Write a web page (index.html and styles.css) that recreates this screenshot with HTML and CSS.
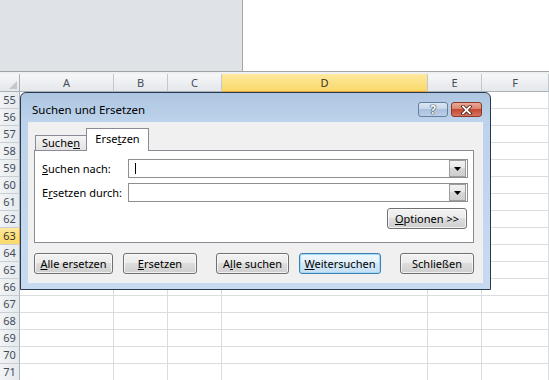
FILE: index.html
```html
<!DOCTYPE html>
<html lang="de">
<head>
  <meta charset="UTF-8">
  <title>Suchen und Ersetzen</title>
  <link rel="stylesheet" href="styles.css">
</head>
<body>
  <div class="top">
    <div class="top-left"></div>
    <div class="top-right"></div>
  </div>
  <div class="top-gap"></div>

  <div class="grid">
    <div class="col rowheads">
      <div class="head corner">
        <svg width="8" height="8" viewBox="0 0 8 8"><polygon points="8,0 8,8 0,8" fill="#c3c8ce"/></svg>
      </div>
      <div class="rowhead">55</div>
      <div class="rowhead">56</div>
      <div class="rowhead">57</div>
      <div class="rowhead">58</div>
      <div class="rowhead">59</div>
      <div class="rowhead">60</div>
      <div class="rowhead">61</div>
      <div class="rowhead">62</div>
      <div class="rowhead selected">63</div>
      <div class="rowhead">64</div>
      <div class="rowhead">65</div>
      <div class="rowhead">66</div>
      <div class="rowhead">67</div>
      <div class="rowhead">68</div>
      <div class="rowhead">69</div>
      <div class="rowhead">70</div>
      <div class="rowhead">71</div>
    </div>
    <div class="col col-a"><div class="head">A</div><div class="cells"></div></div>
    <div class="col col-b"><div class="head">B</div><div class="cells"></div></div>
    <div class="col col-c"><div class="head">C</div><div class="cells"></div></div>
    <div class="col col-d"><div class="head selected">D</div><div class="cells"></div></div>
    <div class="col col-e"><div class="head">E</div><div class="cells"></div></div>
    <div class="col col-f"><div class="head">F</div><div class="cells"></div></div>
  </div>

  <!-- Dialog liegt über dem Tabellenblatt -->
  <div class="dialog">
    <div class="titlebar">
      <span class="title">Suchen und Ersetzen</span>
      <button class="cap-btn help">?</button>
      <button class="cap-btn close">
        <svg width="13" height="10" viewBox="0 0 13 10">
          <path d="M3 1.5 L10 8.5 M10 1.5 L3 8.5" stroke="#4a1a12" stroke-width="3.4" stroke-linecap="square"/>
          <path d="M3 1.5 L10 8.5 M10 1.5 L3 8.5" stroke="#fff" stroke-width="1.8" stroke-linecap="square"/>
        </svg>
      </button>
    </div>

    <div class="client">
      <div class="tabs">
        <div class="tab">Suche<u>n</u></div>
        <div class="tab active">Erse<u>t</u>zen</div>
      </div>

      <div class="panel">
        <div class="field">
          <label class="field-label"><u>S</u>uchen nach:</label>
          <div class="combo">
            <span class="caret"></span>
            <span class="drop"><svg width="7" height="4" viewBox="0 0 7 4"><polygon points="0,0 7,0 3.5,4" fill="#000"/></svg></span>
          </div>
        </div>
        <div class="field">
          <label class="field-label">E<u>r</u>setzen durch:</label>
          <div class="combo">
            <span class="drop"><svg width="7" height="4" viewBox="0 0 7 4"><polygon points="0,0 7,0 3.5,4" fill="#000"/></svg></span>
          </div>
        </div>
        <div class="panel-actions">
          <button class="btn btn-options"><u>O</u>ptionen &gt;&gt;</button>
        </div>
      </div>

      <div class="actions">
        <button class="btn w-79"><u>A</u>lle ersetzen</button>
        <button class="btn w-74 gap-s"><u>E</u>rsetzen</button>
        <button class="btn w-73 gap-l">A<u>l</u>le suchen</button>
        <button class="btn btn-default w-82 gap-s"><u>W</u>eitersuchen</button>
        <button class="btn w-74 gap-l">Schließen</button>
      </div>
    </div>
  </div>
</body>
</html>
```
FILE: styles.css
```css
* {
  box-sizing: border-box;
}

body {
  margin: 0;
  width: 549px;
  height: 380px;
  overflow: hidden;
  position: relative;
  background-color: #fff;
  font-family: "Noto Sans", "DejaVu Sans", sans-serif;
  color: #000;
}

/* Bereich oberhalb des Tabellenblatts */
.top {
  display: flex;
  height: 72px;
  border-bottom: 1px solid #a3a3a3;
}

.top-left {
  width: 243px;
  background-color: #dfe3e8;
  border-right: 1px solid #a6a6a6;
}

.top-right {
  flex: 1;
  background-color: #fff;
}

.top-gap {
  height: 2px;
  background-color: #eef0f2;
}

/* Tabellenblatt */
.grid {
  display: flex;
}

.col {
  flex: none;
}

.rowheads { width: 20px; }
.col-a { width: 94px; }
.col-b { width: 54px; }
.col-c { width: 54px; }
.col-d { width: 206px; }
.col-e { width: 54px; }
.col-f { flex: 1; }

.head {
  height: 18px;
  border-bottom: 1px solid #abb1b9;
  border-right: 1px solid #c3c8ce;
  background: linear-gradient(#f6f7f9, #e4e7eb);
  font-size: 11px;
  line-height: 17px;
  text-align: center;
  color: #444c58;
}

.head.selected {
  background: linear-gradient(#fde99e, #f9d96b);
  border-bottom-color: #e2a33a;
  color: #3a3320;
}

.corner {
  display: flex;
  align-items: flex-end;
  justify-content: flex-end;
  padding: 0 2px 2px 0;
  border-right-color: #abb1b9;
}

.rowhead {
  height: 17px;
  border-bottom: 1px solid #c9ced4;
  border-right: 1px solid #abb1b9;
  background: linear-gradient(to right, #f1f3f5, #e6e9ed);
  font-size: 11px;
  line-height: 16px;
  text-align: center;
  color: #444c58;
}

.rowhead.selected {
  background: linear-gradient(#fde99e, #f9d96b);
  border-right-color: #e2a33a;
  color: #3a3320;
}

.cells {
  height: 289px;
  border-right: 1px solid #dadcdd;
  background: repeating-linear-gradient(#fff 0, #fff 16px, #dadcdd 16px, #dadcdd 17px);
}

/* Dialog */
.dialog {
  position: absolute;
  left: 20px;
  top: 92px;
  width: 471px;
  height: 198px;
  border: 1px solid #2a3a4d;
  border-radius: 6px 6px 0 0;
  background: linear-gradient(#aec6e1, #bdd3eb 29px, #c7dbf0);
  font-size: 11px;
}

.titlebar {
  display: flex;
  align-items: flex-start;
  height: 29px;
  padding: 9px 8px 0 11px;
}

.title {
  flex: 1;
  font-size: 11.5px;
  line-height: 16px;
}

.cap-btn {
  height: 15px;
  padding: 0;
  border-radius: 3px;
  display: flex;
  align-items: center;
  justify-content: center;
  font-family: "Noto Sans", sans-serif;
}

.help {
  width: 30px;
  border: 1px solid #62809f;
  background: linear-gradient(#dce7f3, #c6d7e9 45%, #a9c1dc 50%, #bccfe4);
  font-size: 12px;
  font-weight: bold;
  line-height: 13px;
  color: #fff;
  text-shadow: 0 0 1px #1d3047, 0 0 1px #1d3047, 0 0 1px #1d3047;
}

.close {
  width: 31px;
  margin-left: 3px;
  border: 1px solid #8b3a2a;
  background: linear-gradient(#eaa997, #db8570 45%, #c44a31 50%, #d6735d);
}

.client {
  height: 161px;
  margin: 0 7px;
  padding: 0 6px;
  background-color: #f0f0f0;
}

.tabs {
  display: flex;
  align-items: flex-end;
  height: 28px;
  padding-left: 1px;
}

.tab {
  width: 52px;
  height: 15px;
  border: 1px solid #898c95;
  border-bottom: none;
  background: linear-gradient(#f4f4f4, #e3e3e3);
  line-height: 13px;
  text-align: center;
}

.tab.active {
  position: relative;
  z-index: 1;
  width: 63px;
  height: 23px;
  margin-left: -1px;
  margin-bottom: -1px;
  padding-top: 2px;
  background: #fff;
  line-height: 16px;
}

.panel {
  width: 440px;
  height: 93px;
  border: 1px solid #898c95;
  background-color: #fff;
  padding: 8px 5px 0 7px;
}

.field {
  display: flex;
  align-items: center;
  height: 19px;
  margin-bottom: 5px;
}

.field-label {
  width: 86px;
}

.combo {
  display: flex;
  align-items: center;
  width: 340px;
  height: 19px;
  border: 1px solid #8e8f8f;
  padding-right: 1px;
}

.caret {
  width: 1px;
  height: 11px;
  margin-left: 6px;
  background-color: #000;
}

.drop {
  display: flex;
  align-items: center;
  justify-content: center;
  width: 17px;
  height: 17px;
  margin-left: auto;
  border: 1px solid #9c9c9c;
  background: linear-gradient(#f2f2f2, #e6e6e6 50%, #d7d7d7 50%, #cfcfcf);
}

.panel-actions {
  display: flex;
  justify-content: flex-end;
  margin-top: 6px;
  padding-right: 1px;
}

.btn {
  height: 21px;
  padding: 0;
  border: 1px solid #707070;
  border-radius: 3px;
  background: linear-gradient(#f2f2f2, #ebebeb 50%, #dddddd 50%, #cfcfcf);
  box-shadow: inset 0 0 0 1px rgba(255, 255, 255, 0.7);
  font-family: "Noto Sans", "DejaVu Sans", sans-serif;
  font-size: 11px;
  line-height: 18px;
  color: #000;
  text-align: center;
}

.btn-options {
  width: 80px;
}

.btn-default {
  border-color: #3c7fb1;
  background: linear-gradient(#eef7fd, #e2f0fa 50%, #d2e8f7 50%, #c5e0f3);
  box-shadow: inset 0 0 0 1px #a6dbf7;
}

.actions {
  display: flex;
  margin-top: 10px;
}

.w-73 { width: 73px; }
.w-74 { width: 74px; }
.w-79 { width: 79px; }
.w-82 { width: 82px; }

.gap-s { margin-left: 10px; }
.gap-l { margin-left: 19px; }
```
